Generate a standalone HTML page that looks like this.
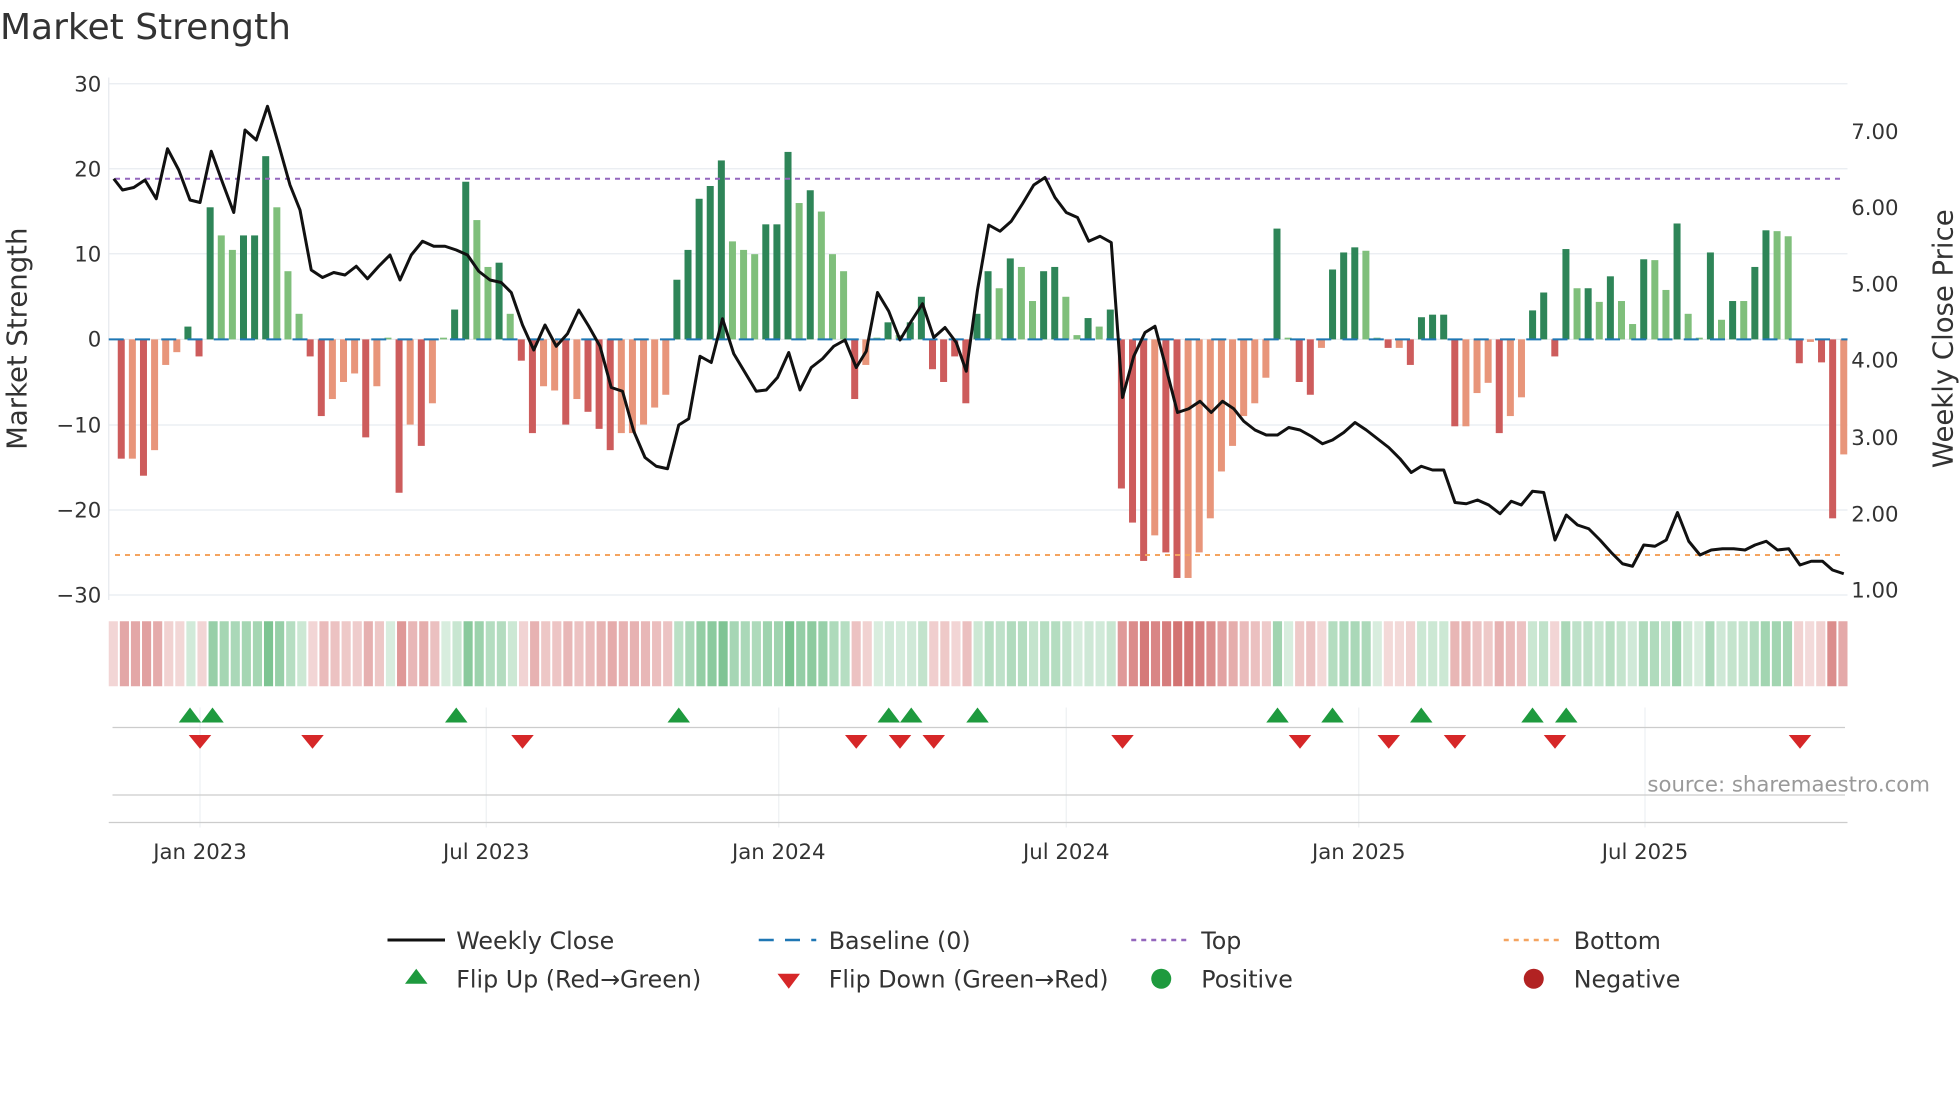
<!DOCTYPE html>
<html><head><meta charset="utf-8"><style>
html,body{margin:0;padding:0;background:#fff;width:1960px;height:1102px;overflow:hidden}
svg{display:block}
text{font-family:"DejaVu Sans","Liberation Sans",sans-serif;fill:#333}
</style></head><body>
<svg id="s" width="1960" height="1102" viewBox="0 0 1568 881.6" xmlns="http://www.w3.org/2000/svg">
<text x="0" y="31" font-size="28.8">Market Strength</text>
<g id="grid" stroke="#e8ecf0" stroke-width="1"></g>
<line x1="87" y1="62" x2="87" y2="480" stroke="#e6e9ee"/>
<g id="bars"></g>
<line x1="87" y1="271.5" x2="1478" y2="271.5" stroke="#1f77b4" stroke-width="1.6" stroke-dasharray="12 9"/>
<line x1="92" y1="143" x2="1476" y2="143" stroke="#9467bd" stroke-width="1.6" stroke-dasharray="4 4"/>
<line x1="92" y1="444" x2="1476" y2="444" stroke="#f4a460" stroke-width="1.6" stroke-dasharray="4 4"/>
<polyline id="line" fill="none" stroke="#111" stroke-width="2.4" stroke-linejoin="round"/>
<g font-size="17" text-anchor="end">
<text x="81" y="73">30</text><text x="81" y="141">20</text><text x="81" y="209">10</text><text x="81" y="277">0</text>
<text x="81" y="346">−10</text><text x="81" y="414">−20</text><text x="81" y="482">−30</text>
</g>
<g font-size="17">
<text x="1481" y="111">7.00</text><text x="1481" y="172">6.00</text><text x="1481" y="233">5.00</text><text x="1481" y="294">4.00</text>
<text x="1481" y="356">3.00</text><text x="1481" y="417">2.00</text><text x="1481" y="478">1.00</text>
</g>
<text transform="translate(21,271) rotate(-90)" font-size="22" text-anchor="middle">Market Strength</text>
<text transform="translate(1562,271) rotate(-90)" font-size="22" text-anchor="middle">Weekly Close Price</text>
<g id="heat"></g>
<g id="vg" stroke="#eef0f3"></g>
<line x1="90" y1="582" x2="1476" y2="582" stroke="#ccc"/>
<line x1="90" y1="636" x2="1476" y2="636" stroke="#ccc"/>
<line x1="87" y1="658" x2="1478" y2="658" stroke="#ccc"/>
<g id="flips"></g>
<text x="1544" y="633" font-size="17" fill="#999" style="fill:#999" text-anchor="end">source: sharemaestro.com</text>
<g font-size="17" text-anchor="middle">
<text x="160" y="687">Jan 2023</text><text x="389" y="687">Jul 2023</text><text x="623" y="687">Jan 2024</text>
<text x="853" y="687">Jul 2024</text><text x="1087" y="687">Jan 2025</text><text x="1316" y="687">Jul 2025</text>
</g>
<g font-size="19">
<line x1="310" y1="752" x2="356" y2="752" stroke="#111" stroke-width="2.4"/><text x="365" y="759">Weekly Close</text>
<line x1="607" y1="752" x2="653" y2="752" stroke="#1f77b4" stroke-width="2" stroke-dasharray="12 9"/><text x="663" y="759">Baseline (0)</text>
<line x1="905" y1="752" x2="951" y2="752" stroke="#9467bd" stroke-width="2" stroke-dasharray="4 4"/><text x="961" y="759">Top</text>
<line x1="1203" y1="752" x2="1249" y2="752" stroke="#f4a460" stroke-width="2" stroke-dasharray="4 4"/><text x="1259" y="759">Bottom</text>
<polygon points="333,775 324,787 342,787" fill="#1e9a3e"/><text x="365" y="790">Flip Up (Red→Green)</text>
<polygon points="622,779 640,779 631,791" fill="#d62728"/><text x="663" y="790">Flip Down (Green→Red)</text>
<circle cx="929" cy="783" r="8" fill="#1e9a3e"/><text x="961" y="790">Positive</text>
<circle cx="1227" cy="783" r="8" fill="#b22222"/><text x="1259" y="790">Negative</text>
</g>
</svg>
<script>
var NS="http://www.w3.org/2000/svg";
function el(p,t,a){var e=document.createElementNS(NS,t);for(var k in a)e.setAttribute(k,a[k]);p.appendChild(e);return e;}
var g=document.getElementById('grid');
[67,135,203,271.5,340,408,476].forEach(function(y){el(g,'line',{x1:87,y1:y,x2:1478,y2:y});});
var vg=document.getElementById('vg');
[160,389,623,853,1087,1316].forEach(function(x){el(vg,'line',{x1:x,y1:566,x2:x,y2:662});});
var v=[-14,1,-14,0,-16,1,-13,0,-3,0,-1.5,0,1.5,1,-2,1,15.5,1,12.2,0,10.5,0,12.2,1,12.2,1,21.5,1,15.5,0,8,0,3,0,-2,1,-9,1,-7,0,-5,0,-4,0,-11.5,1,-5.5,0,0.2,0,-18,1,-10,0,-12.5,1,-7.5,0,0.2,0,3.5,1,18.5,1,14,0,8.5,0,9,1,3,0,-2.5,1,-11,1,-5.5,0,-6,0,-10,1,-7,0,-8.5,1,-10.5,1,-13,1,-11,0,-11,0,-10,0,-8,0,-6.5,0,7,1,10.5,1,16.5,1,18,1,21,1,11.5,0,10.5,0,10,0,13.5,1,13.5,1,22,1,16,0,17.5,1,15,0,10,0,8,0,-7,1,-3,0,0.2,0,2,1,0.5,0,2,1,5,1,-3.5,1,-5,1,-2,1,-7.5,1,3,1,8,1,6,0,9.5,1,8.5,0,4.5,0,8,1,8.5,1,5,0,0.5,0,2.5,1,1.5,0,3.5,1,-17.5,1,-21.5,1,-26,1,-23,0,-25,1,-28,1,-28,0,-25,0,-21,0,-15.5,0,-12.5,0,-9,0,-7.5,0,-4.5,0,
13,1,0.2,0,-5,1,-6.5,1,-1,0,8.2,1,10.2,1,10.8,1,10.4,0,0.2,0,-1,1,-1,0,-3,1,2.6,1,2.9,1,2.9,1,-10.2,1,-10.2,0,-6.3,0,-5.1,0,-11,1,-9,0,-6.8,0,3.4,1,5.5,1,-2,1,10.6,1,6,0,6,1,4.4,0,7.4,1,4.5,0,1.8,0,9.4,1,9.3,0,5.8,0,13.6,1,3,0,0.2,0,10.2,1,2.3,0,4.5,1,4.5,0,8.5,1,12.8,1,12.7,0,12.1,0,-2.8,1,-0.3,0,-2.7,1,-21,1,-13.5,0];
var bars=document.getElementById('bars'),heat=document.getElementById('heat');
var n=v.length/2,step=(1475-97)/(n-1),u=6.817;
function hc(val,x){var a=Math.min(1,0.25+Math.abs(val)/28*0.75);
 el(heat,'rect',{x:x,y:497,width:7.3,height:52,fill:val>=0?'#3aa55a':'#c8504f','fill-opacity':(a*0.8).toFixed(2)});}
var hstep=(1478-87-7.3)/n;
hc(-2,87);
for(var i=0;i<n;i++){var val=v[2*i],d=v[2*i+1],x=97+i*step;
 var col=val>=0?(d?'#2e8558':'#7fbf7b'):(d?'#cd5c5c':'#e8957a');
 var h=Math.abs(val)*u,y=val>=0?271.5-h:271.5;
 el(bars,'rect',{x:x-2.8,y:y,width:5.6,height:Math.max(h,0.5),fill:col});
 hc(val,87+(i+1)*hstep);
}
var p="91,143 98,152 107,150 116,144 125,159 134,119 143,136 152,160 160,162 169,121 178,146 187,170 196,104 205,112 214,85 223,116 232,148 240,168 249,216 258,222 267,218 276,220 285,213 294,223 303,213 312,204 320,224 329,204 338,193 347,197 356,197 365,200 374,204 383,217 392,224 401,226 409,234 418,260 427,280 436,260 445,277 454,267 463,248 471,261 480,277 489,310 498,313 507,345 516,366 525,373 534,375 543,340 551,335 560,285 569,290 578,255 587,283 596,298 605,313 613,312 622,302 631,282 640,312 649,294 658,287 667,277 676,272 685,294 693,281 702,234 711,249 720,272 729,257 738,243 747,270 756,262 765,274 773,297 782,232 791,180 800,185 809,177 818,163 827,148 836,142 844,158 853,170 862,174 871,193 880,189 889,194 898,318 907,285 916,266 924,261 933,295 942,330 951,327 960,321 969,330 978,321 987,327 995,337 1004,344 1013,348 1022,348 1031,342 1040,344 1049,349 1058,355 1066,352 1075,346 1084,338 1093,344 1102,351 1111,358 1120,367 1129,378 1137,373 1146,376 1155,376 1164,402 1173,403 1182,400 1191,404 1200,411 1209,401 1217,404 1226,393 1235,394 1244,432 1253,412 1262,420 1271,423 1280,432 1289,442 1298,451 1306,453 1315,436 1324,437 1333,432 1342,410 1351,433 1360,444 1369,440 1378,439 1387,439 1396,440 1404,436 1413,433 1422,440 1431,439 1440,452 1449,449 1458,449 1466,456 1475,459";
document.getElementById('line').setAttribute('points',p);
var f=document.getElementById('flips');
[152,170,365,543,711,729,782,1022,1066,1137,1226,1253].forEach(function(x){el(f,'polygon',{points:(x)+',566 '+(x-9)+',578 '+(x+9)+',578',fill:'#1e9a3e'});});
[160,250,418,685,720,747,898,1040,1111,1164,1244,1440].forEach(function(x){el(f,'polygon',{points:(x-9)+',588 '+(x+9)+',588 '+x+',599',fill:'#d62728'});});
</script>
</body></html>
